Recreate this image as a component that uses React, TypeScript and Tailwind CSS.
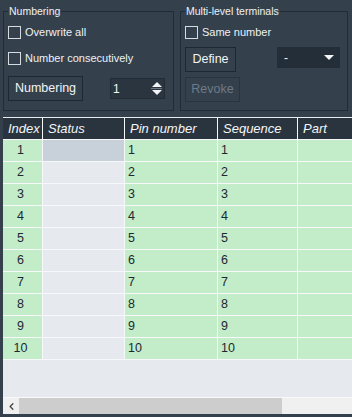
import { ChevronLeft } from 'lucide-react'

const font = { fontFamily: '"Liberation Sans", Arial, sans-serif' }

function CheckRow({ label }: { label: string }) {
  return (
    <div className="flex items-center gap-[4px] text-[11px] text-[#eef1f4]">
      <span className="w-[13px] h-[13px] border border-[#d6dbe0]" />
      <span>{label}</span>
    </div>
  )
}

const rows = Array.from({ length: 10 }, (_, i) => i + 1)

export default function App() {
  return (
    <div style={font} className="w-[352px] h-[417px] bg-[#34414d] flex flex-col overflow-hidden">
      {/* Top panel */}
      <div className="flex gap-[6px] pl-[3px] pr-[4px] pt-[5px]">
        {/* Numbering group */}
        <fieldset className="w-[171px] border border-[#222c36] pl-[4px] pr-[8px] pb-[8px]">
          <legend className="text-[10.5px] leading-[13px] text-[#eef1f4] px-[1px]">Numbering</legend>
          <div className="h-[28px] flex items-center">
            <CheckRow label="Overwrite all" />
          </div>
          <div className="h-[24px] flex items-center">
            <CheckRow label="Number consecutively" />
          </div>
          <div className="mt-[6px] flex items-center justify-between">
            <button className="w-[75px] h-[25px] border border-[#1f2830] text-[12.5px] text-[#f2f4f6]">
              Numbering
            </button>
            <div className="w-[55px] h-[21px] bg-[#2a3540] border border-[#222c36] flex items-center justify-between pl-[2px] pr-[2px]">
              <span className="text-[12px] text-[#f2f4f6]">1</span>
              <div className="flex flex-col items-center gap-[1px]">
                <span className="w-0 h-0 border-l-[5px] border-r-[5px] border-b-[5px] border-l-transparent border-r-transparent border-b-[#f2f4f6]" />
                <span className="w-[11px] h-px bg-[#6b7784]" />
                <span className="w-0 h-0 border-l-[5px] border-r-[5px] border-t-[5px] border-l-transparent border-r-transparent border-t-[#f2f4f6]" />
              </div>
            </div>
          </div>
        </fieldset>

        {/* Multi-level terminals group */}
        <fieldset className="flex-1 border border-[#222c36] pl-[4px] pr-[7px] pb-[8px]">
          <legend className="text-[10.5px] leading-[13px] text-[#eef1f4] px-[1px]">Multi-level terminals</legend>
          <div className="h-[28px] flex items-center">
            <CheckRow label="Same number" />
          </div>
          <div className="mt-px flex items-start justify-between">
            <button className="w-[51px] h-[25px] border border-[#1f2830] text-[12.5px] text-[#f2f4f6]">
              Define
            </button>
            <div className="w-[63px] h-[21px] bg-[#232e39] flex items-center justify-between pl-[7px] pr-[6px]">
              <span className="text-[12px] text-[#f2f4f6]">-</span>
              <span className="w-0 h-0 border-l-[5px] border-r-[5px] border-t-[5px] border-l-transparent border-r-transparent border-t-[#f2f4f6]" />
            </div>
          </div>
          <div className="mt-[4px]">
            <button className="w-[55px] h-[25px] border border-[#2a343e] text-[12.5px] text-[#6e7a86]">
              Revoke
            </button>
          </div>
        </fieldset>
      </div>

      {/* Table */}
      <div className="mt-[6px] ml-[3px] flex-1 flex flex-col border-t border-[#e8ecef] bg-[#e6e9ee] mb-[3px]">
        <div className="grid grid-cols-[39px_81px_92px_79px_1fr] gap-x-px bg-[#f4f6f8] border-b border-[#f4f6f8]">
          {['Index', 'Status', 'Pin number', 'Sequence', 'Part'].map((h) => (
            <div key={h} className="h-[21px] bg-[#29343f] pl-[5px] flex items-center italic text-[13px] text-[#f4f6f8]">
              {h}
            </div>
          ))}
        </div>
        {rows.map((n) => (
          <div key={n} className="grid grid-cols-[39px_81px_92px_79px_1fr] gap-x-px bg-[#f6f8f9] border-b border-[#f6f8f9] text-[12.5px] text-[#1c2833]">
            <div className="h-[21px] bg-[#c3ecc8] flex items-center justify-center pr-[4px]">{n}</div>
            <div className={n === 1 ? 'bg-[#c8d0d9]' : 'bg-[#e6e9ee]'} />
            <div className="bg-[#c3ecc8] flex items-center pl-[3px]">{n}</div>
            <div className="bg-[#c3ecc8] flex items-center pl-[3px]">{n}</div>
            <div className="bg-[#c3ecc8]" />
          </div>
        ))}
        <div className="flex-1" />
        {/* Horizontal scrollbar */}
        <div className="h-[17px] border-t border-[#f6f8f9] flex bg-[#f0f0f0]">
          <div className="w-[16px] flex items-center justify-center text-[#4a4a4a]">
            <ChevronLeft size={11} strokeWidth={3} />
          </div>
          <div className="w-[263px] bg-[#cdcdcd]" />
        </div>
      </div>
    </div>
  )
}
